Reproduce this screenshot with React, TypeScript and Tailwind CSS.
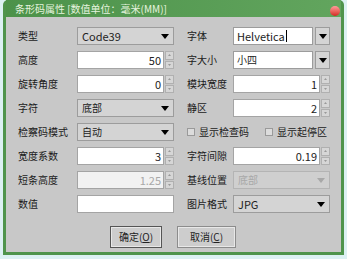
import React from "react";

const font = { fontFamily: '"Noto Sans CJK SC", "Liberation Sans", sans-serif' };

function Arrow({ color = "#000" }: { color?: string }) {
  return (
    <svg width="8" height="5" viewBox="0 0 8 5">
      <path d="M0 0H8L4 5Z" fill={color} />
    </svg>
  );
}

function Combo({ value, disabled, cjk }: { value: string; disabled?: boolean; cjk?: boolean }) {
  return (
    <div
      className={`flex h-[18px] items-center justify-between border px-[4px] ${
        disabled ? "border-[#b4b4b4] bg-[#cfcfcf] text-[#a8a8a8]" : "border-[#9c9c9c] bg-[#d4d4d4] text-[#222]"
      }`}
    >
      <span className={`${cjk ? "text-[10px]" : "text-[11px]"} leading-none`}>{value}</span>
      <Arrow color={disabled ? "#a8a8a8" : "#000"} />
    </div>
  );
}

function EditCombo({ value, caret, cjk }: { value: string; caret?: boolean; cjk?: boolean }) {
  return (
    <div className="flex h-[18px] gap-[2px]">
      <div className="flex flex-1 items-center border border-[#9c9c9c] bg-white px-[3px]">
        <span className={`${cjk ? "text-[10px]" : "text-[11px]"} leading-none text-[#222]`}>{value}</span>
        {caret && <span className="ml-[1px] h-[12px] w-px bg-black" />}
      </div>
      <div className="flex w-[15px] items-center justify-center border border-[#9c9c9c] bg-[#d4d4d4]">
        <Arrow />
      </div>
    </div>
  );
}

function Spin({ value, disabled }: { value: string; disabled?: boolean }) {
  return (
    <div className="flex h-[18px] gap-px">
      <div
        className={`flex flex-1 items-center justify-end border border-[#a4a4a4] px-[2px] ${
          disabled ? "bg-[#f2f2f2] text-[#a8a8a8]" : "bg-white text-[#222]"
        }`}
      >
        <span className="text-[11px] leading-none">{value}</span>
      </div>
      <div className="flex w-[9px] flex-col gap-px">
        <div className="flex flex-1 items-center justify-center border border-[#b0b0b0] bg-[#d6d6d6]">
          <svg width="3" height="2" viewBox="0 0 3 2">
            <path d="M0 2L1.5 0L3 2Z" fill="#999" />
          </svg>
        </div>
        <div className="flex flex-1 items-center justify-center border border-[#b0b0b0] bg-[#d6d6d6]">
          <svg width="3" height="2" viewBox="0 0 3 2">
            <path d="M0 0H3L1.5 2Z" fill="#999" />
          </svg>
        </div>
      </div>
    </div>
  );
}

function Label({ children }: { children: React.ReactNode }) {
  return (
    <div className="flex h-[18px] items-center whitespace-nowrap text-[10px] leading-none text-[#1a1a1a]">
      {children}
    </div>
  );
}

function Check({ label }: { label: string }) {
  return (
    <div className="flex h-[18px] items-center gap-[4px] whitespace-nowrap">
      <span className="h-[8px] w-[8px] border border-[#9a9a9a] bg-[#dcdcdc]" />
      <span className="text-[10px] leading-none text-[#1a1a1a]">{label}</span>
    </div>
  );
}

export default function App() {
  return (
    <div className="h-[259px] w-[347px] bg-[#dcf1f3] pl-[3px]" style={font}>
      <div className="relative flex h-[255px] w-[341px] flex-col rounded-t-[5px] bg-[#4f944c] px-[3px] pb-[3px]">
        <div className="flex h-[17px] items-center bg-gradient-to-r from-[#4c924a] to-[#62a55e] pl-[9px] text-[10px] leading-none text-[#e6f4df]">
          条形码属性 [数值单位：毫米(MM)]
        </div>
        <div className="absolute right-[4px] top-[6px] h-[10px] w-[10px] rounded-full bg-gradient-to-b from-[#ff9a9a] to-[#d42020]" />
        <div className="flex flex-1 flex-col bg-[#c8c8c8] pl-[12px] pt-[10px]">
          <div className="grid grid-cols-[59px_97px_13px_46px_97px] gap-y-[6px]">
            <Label>类型</Label>
            <Combo value="Code39" />
            <div />
            <Label>字体</Label>
            <EditCombo value="Helvetica" caret />

            <Label>高度</Label>
            <Spin value="50" />
            <div />
            <Label>字大小</Label>
            <EditCombo value="小四" cjk />

            <Label>旋转角度</Label>
            <Spin value="0" />
            <div />
            <Label>模块宽度</Label>
            <Spin value="1" />

            <Label>字符</Label>
            <Combo value="底部" cjk />
            <div />
            <Label>静区</Label>
            <Spin value="2" />

            <Label>检察码模式</Label>
            <Combo value="自动" cjk />
            <div />
            <div className="col-span-2 flex gap-[16px]">
              <Check label="显示检查码" />
              <Check label="显示起停区" />
            </div>

            <Label>宽度系数</Label>
            <Spin value="3" />
            <div />
            <Label>字符间隙</Label>
            <Spin value="0.19" />

            <Label>短条高度</Label>
            <Spin value="1.25" disabled />
            <div />
            <Label>基线位置</Label>
            <Combo value="底部" disabled cjk />

            <Label>数值</Label>
            <div className="h-[18px] border border-[#a4a4a4] bg-white" />
            <div />
            <Label>图片格式</Label>
            <Combo value="JPG" />
          </div>
          <div className="mt-[13px] flex gap-[15px] pl-[92px]">
            <div className="flex h-[22px] w-[52px] items-center justify-center border border-[#555] bg-[#cdcdcd] text-[10px] leading-none text-[#222] shadow-[inset_0_0_0_1px_#e8e8e8]">
              确定(<span className="underline">O</span>)
            </div>
            <div className="flex h-[22px] w-[59px] items-center justify-center border border-[#8c8c8c] bg-[#cdcdcd] text-[10px] leading-none text-[#222] shadow-[inset_0_0_0_1px_#e8e8e8]">
              取消(<span className="underline">C</span>)
            </div>
          </div>
        </div>
      </div>
    </div>
  );
}
